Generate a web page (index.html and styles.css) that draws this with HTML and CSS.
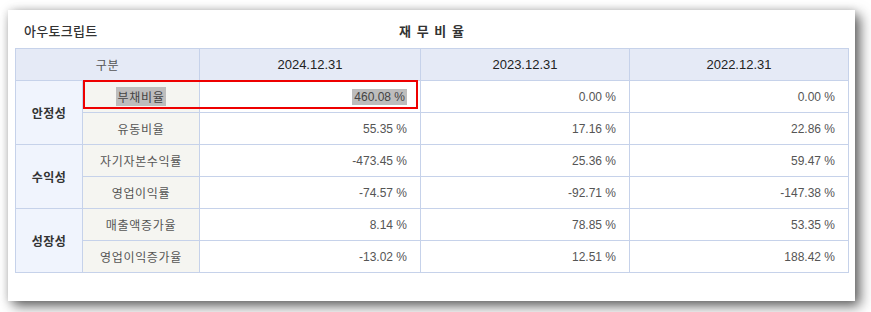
FILE: index.html
```html
<!DOCTYPE html>
<html lang="ko">
<head>
<meta charset="utf-8">
<title>재무비율</title>
<link rel="stylesheet" href="styles.css">
</head>
<body>
<div class="card">
  <div class="title-row">
    <div class="company">아우토크립트</div>
    <div class="title">재 무 비 율</div>
    <div></div>
  </div>
  <table class="ratio">
    <colgroup>
      <col class="c-group">
      <col class="c-label">
      <col class="c-y1">
      <col class="c-y2">
      <col class="c-y3">
    </colgroup>
    <thead>
      <tr>
        <th colspan="2" class="h-kind">구분</th>
        <th>2024.12.31</th>
        <th>2023.12.31</th>
        <th>2022.12.31</th>
      </tr>
    </thead>
    <tbody>
      <tr>
        <td rowspan="2" class="group">안정성</td>
        <td class="label"><span class="sel">부채비율</span></td>
        <td class="num"><span class="sel">460.08 %</span></td>
        <td class="num">0.00 %</td>
        <td class="num">0.00 %</td>
      </tr>
      <tr>
        <td class="label">유동비율</td>
        <td class="num">55.35 %</td>
        <td class="num">17.16 %</td>
        <td class="num">22.86 %</td>
      </tr>
      <tr>
        <td rowspan="2" class="group">수익성</td>
        <td class="label">자기자본수익률</td>
        <td class="num">-473.45 %</td>
        <td class="num">25.36 %</td>
        <td class="num">59.47 %</td>
      </tr>
      <tr>
        <td class="label">영업이익률</td>
        <td class="num">-74.57 %</td>
        <td class="num">-92.71 %</td>
        <td class="num">-147.38 %</td>
      </tr>
      <tr>
        <td rowspan="2" class="group">성장성</td>
        <td class="label">매출액증가율</td>
        <td class="num">8.14 %</td>
        <td class="num">78.85 %</td>
        <td class="num">53.35 %</td>
      </tr>
      <tr>
        <td class="label">영업이익증가율</td>
        <td class="num">-13.02 %</td>
        <td class="num">12.51 %</td>
        <td class="num">188.42 %</td>
      </tr>
    </tbody>
  </table>
  <div class="mark"></div>
</div>
</body>
</html>
```

FILE: styles.css
```css
html, body {
  margin: 0;
  padding: 0;
  background: #ffffff;
}
body {
  padding: 10px 0 0 8px;
  width: 871px;
  height: 312px;
  box-sizing: border-box;
  overflow: hidden;
  font-family: "Liberation Sans", "Noto Sans CJK KR", sans-serif;
}
.card {
  position: relative;
  width: 847px;
  height: 291px;
  box-sizing: border-box;
  background: #ffffff;
  padding: 12px 7px 0 7px;
  box-shadow: 5px 5px 12px rgba(0, 0, 0, 0.62), 0 0 8px rgba(0, 0, 0, 0.12);
}
.title-row {
  display: grid;
  grid-template-columns: 1fr auto 1fr;
  align-items: center;
  height: 18px;
  margin-bottom: 8px;
  color: #333;
}
.company {
  padding-left: 9px;
  font-size: 13px;
  font-family: "Noto Sans CJK KR", sans-serif;
  font-weight: 500;
  line-height: 18px;
  letter-spacing: 0.3px;
}
.title {
  font-size: 13px;
  font-weight: 700;
  font-family: "Noto Sans CJK KR", sans-serif;
  letter-spacing: 1px;
  line-height: 18px;
  padding-left: 1px;
}
.ratio {
  width: 833px;
  table-layout: fixed;
  border-collapse: collapse;
  border: 1px solid #c6d2ea;
}
.c-group { width: 67px; }
.c-label { width: 117px; }
.c-y1 { width: 221px; }
.c-y2 { width: 209px; }
.c-y3 { width: 219px; }
.ratio th,
.ratio td {
  border: 1px solid #c6d2ea;
  height: 32px;
  padding: 0;
  box-sizing: border-box;
}
.ratio th {
  background: #e5eaf6;
  font-size: 13px;
  font-weight: 400;
  color: #222;
  text-align: center;
}
.ratio th.h-kind {
  font-family: "Noto Sans CJK KR", sans-serif;
  font-size: 12px;
  letter-spacing: 0.6px;
  color: #555;
}
.group {
  background: #f0f4fd;
  text-align: center;
  font-family: "Noto Sans CJK KR", sans-serif;
  font-weight: 700;
  font-size: 12px;
  letter-spacing: 0.5px;
  color: #333;
}
.label {
  background: #f5f5f1;
  text-align: center;
  font-family: "Noto Sans CJK KR", sans-serif;
  font-size: 12px;
  letter-spacing: 0.7px;
  color: #555;
}
.num {
  text-align: right;
  padding-right: 13px !important;
  font-size: 12px;
  color: #555;
}
.sel {
  background: #bdbdbd;
  color: #444;
  padding: 1px 2px;
}
.mark {
  position: absolute;
  left: 75px;
  top: 70px;
  width: 335px;
  height: 29px;
  box-sizing: border-box;
  border: 2px solid #ee0000;
}
```
